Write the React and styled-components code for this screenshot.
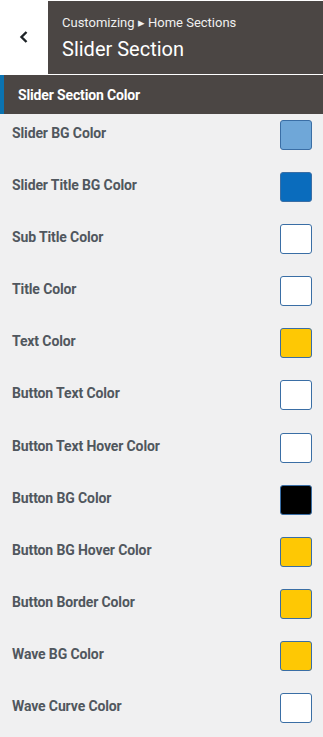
import React from "react"
import styled, { createGlobalStyle } from "styled-components"

const Global = createGlobalStyle`
  body {
    margin: 0;
    background: #f0f0f1;
    font-family: Roboto, "Noto Sans", sans-serif;
  }
`

const Page = styled.div`
  width: 323px;
  min-height: 737px;
  background: #f0f0f1;
  overflow: hidden;
`

const Header = styled.div`
  display: flex;
  height: 74px;
  border-bottom: 1px solid #ffffff;
  background: #ffffff;
`

const BackButton = styled.div`
  width: 48px;
  display: flex;
  align-items: center;
  justify-content: center;
  background: #ffffff;
  color: #1d2327;
`

const TitleBlock = styled.div`
  flex: 1;
  background: #4b4644;
  padding: 14px 0 0 14px;
  color: #ffffff;
  margin-top: 1px;
`

const Crumb = styled.div`
  font-size: 13px;
  line-height: 16px;
  color: #f0f0f0;
`

const Title = styled.div`
  font-size: 20px;
  line-height: 24px;
  margin-top: 6px;
`

const SectionBar = styled.div`
  height: 39px;
  display: flex;
  align-items: center;
  background: #4b4644;
  border-left: 4px solid #0b73b1;
  padding-left: 14px;
  color: #ffffff;
  font-size: 14px;
  font-weight: 700;
  letter-spacing: -0.15px;
`

const List = styled.div`
  display: flex;
  flex-direction: column;
  padding-top: 6px;
`

const Row = styled.div`
  display: flex;
  justify-content: space-between;
  align-items: flex-start;
  height: 52.1px;
  padding: 0 11px 0 12px;
`

const Label = styled.span`
  font-size: 14px;
  font-weight: 700;
  color: #50575e;
  letter-spacing: -0.12px;
  line-height: 16px;
  margin-top: 5px;
`

const Swatch = styled.div`
  width: 30px;
  height: 28px;
  border: 1px solid #3a6ea5;
  border-radius: 3px;
  background: ${(p) => p.color};
`

const rows = [
  ["Slider BG Color", "#6fa7d8"],
  ["Slider Title BG Color", "#0a6cbd"],
  ["Sub Title Color", "#ffffff"],
  ["Title Color", "#ffffff"],
  ["Text Color", "#fec804"],
  ["Button Text Color", "#ffffff"],
  ["Button Text Hover Color", "#ffffff"],
  ["Button BG Color", "#000000"],
  ["Button BG Hover Color", "#fec804"],
  ["Button Border Color", "#fec804"],
  ["Wave BG Color", "#fec804"],
  ["Wave Curve Color", "#ffffff"],
]

export default function App() {
  return (
    <Page>
      <Global />
      <Header>
        <BackButton>
          <svg width="12" height="14" viewBox="0 0 12 14">
            <path d="M8.5 2 L3.5 7 L8.5 12" fill="none" stroke="currentColor" strokeWidth="2.4" />
          </svg>
        </BackButton>
        <TitleBlock>
          <Crumb>Customizing ▸ Home Sections</Crumb>
          <Title>Slider Section</Title>
        </TitleBlock>
      </Header>
      <SectionBar>Slider Section Color</SectionBar>
      <List>
        {rows.map(([label, color]) => (
          <Row key={label}>
            <Label>{label}</Label>
            <Swatch color={color} />
          </Row>
        ))}
      </List>
    </Page>
  )
}
